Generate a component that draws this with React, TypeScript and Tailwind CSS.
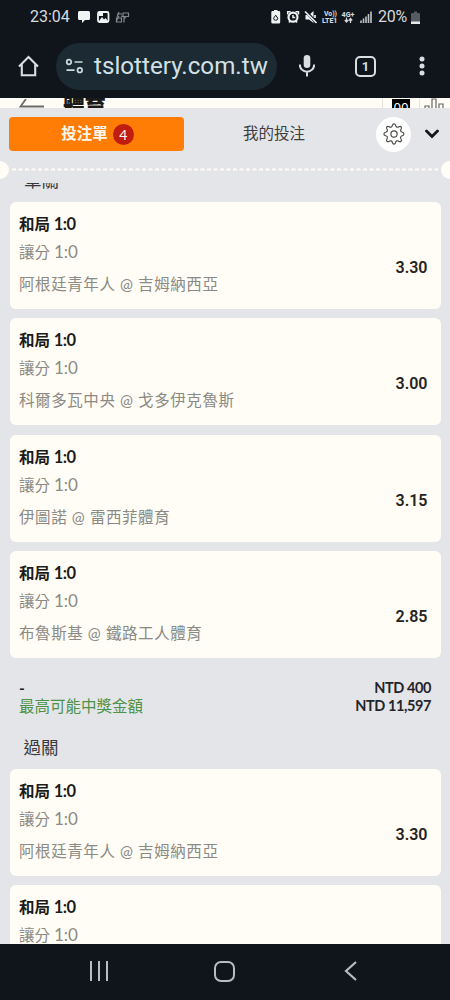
import React from 'react';

interface Bet {
  match: string;
  odds: string;
}

const bets: Bet[] = [
  { match: '阿根廷青年人 @ 吉姆納西亞', odds: '3.30' },
  { match: '科爾多瓦中央 @ 戈多伊克魯斯', odds: '3.00' },
  { match: '伊圖諾 @ 雷西菲體育', odds: '3.15' },
  { match: '布魯斯基 @ 鐵路工人體育', odds: '2.85' },
];

const BetCard: React.FC<Bet> = ({ match, odds }) => (
  <li className="flex h-[107px] shrink-0 items-start justify-between rounded-md bg-[#fffdf5] pr-[13px] pl-[9.5px]">
    <div className="whitespace-nowrap">
      <h3 className="mt-[10px] text-[15.5px] leading-6 font-bold text-[#1c1b19]">
        和局 <span className="text-[16.5px] leading-none tracking-[-0.5px] [font-feature-settings:'calt'_0,'case'_0]">1:0</span>
      </h3>
      <p className="mt-1 text-[15.5px] leading-6 text-[#8b8a85]">
        讓分 <span className="text-[17px] leading-none tracking-[-0.1px] [font-feature-settings:'calt'_0,'case'_0]">1:0</span>
      </p>
      <p className="mt-2 text-[15.5px] leading-6 tracking-[0.58px] text-[#8b8a85]">{match}</p>
    </div>
    <span className="mt-[54px] font-['Roboto','Liberation_Sans',sans-serif] text-[16px] leading-6 font-semibold text-[#24231f]">
      {odds}
    </span>
  </li>
);

const StatusBar: React.FC = () => (
  <div className="flex h-[34px] items-center pl-[30px] font-['Roboto',sans-serif] text-[#d6dadd]">
    <span className="w-[47px] text-[16px] leading-none">23:04</span>
    <svg className="h-[14px] w-[56px]" viewBox="0 0 56 14">
      <path d="M2.500 1h9a1.500 1.500 0 0 1 1.500 1.500v6a1.500 1.500 0 0 1-1.500 1.500H8l-3 3v-3H2.500A1.500 1.500 0 0 1 1 8.500v-6A1.500 1.500 0 0 1 2.500 1z" fill="#f1f4f5" />
      <rect x="21" y="2" width="10.500" height="10" rx="1.500" fill="none" stroke="#f1f4f5" strokeWidth="1.800" />
      <path d="M22 11l3-4 2 2.500 1.500-1.500L31 11z" fill="#f1f4f5" />
      <path d="M22 3h4v3h-4z" fill="#f1f4f5" />
      <path d="M40 4h5M42 2l-2 5M39.500 8h5v4h-5zM46 3h5.500v3.500H46zM47 8v4.500M44 6l5 2M39 12l3-6" fill="none" stroke="#7f868b" strokeWidth="1.200" />
    </svg>
    <svg className="ml-[136px] h-[16px] w-[104px]" viewBox="0 0 104 16">
      <path d="M3.500 2H5V1h3.500v1H10a1.200 1.200 0 0 1 1.200 1.200v10A1.200 1.200 0 0 1 10 14.400H3.500a1.200 1.200 0 0 1-1.200-1.200v-10A1.200 1.200 0 0 1 3.500 2z" fill="#eef1f2" />
      <path d="M4.600 9.200l2.100-3 2.100 3a2.100 2.100 0 0 1-4.200 0z" fill="none" stroke="#10151c" />
      <circle cx="24" cy="8.200" r="4.500" fill="none" stroke="#eef1f2" strokeWidth="2.200" />
      <path d="M18.700 5.500V2.800h3M29.500 5.500V2.800h-3M24 6v2.500h2.200M20 13.500l1-1.500M28 13.500l-1-1.500" fill="none" stroke="#eef1f2" strokeWidth="1.500" />
      <path d="M36.500 6h3.500l4.500-4v12L40 10.500h-3.500z" fill="#eef1f2" />
      <path d="M36.500 2l11 12" stroke="#10151c" strokeWidth="3" />
      <path d="M36 2.500L47.500 14M46 6v3" stroke="#eef1f2" strokeWidth="1.700" />
      <text x="55" y="7" fontSize="6.800" fontWeight="800" fill="#d4d8da">Vo))</text>
      <text x="53" y="14" fontSize="7" fontWeight="800" fill="#d4d8da">LTE1</text>
      <text x="72.500" y="7.500" fontSize="7.200" fontWeight="800" fill="#d4d8da">4G+</text>
      <path d="M77.500 8.500v4.500M75.800 11l1.700 2 1.700-2M81.500 14V9.500M79.800 11.500l1.700-2 1.700 2" fill="none" stroke="#d4d8da" strokeWidth="1.300" />
      <path d="M92 14v-2.500M94.500 14V9.500M97 14V7.500M99.500 14V5M102 14V2.500" stroke="#bfc4c8" strokeWidth="1.600" />
    </svg>
    <span className="ml-[5px] w-[32px] text-[16px] leading-none tracking-[-0.3px]">20%</span>
    <svg className="ml-px h-[13px] w-[9px]" viewBox="0 0 9 13">
      <path d="M1 2h2V.5h3V2h2a1 1 0 0 1 1 1v9.500H0V3a1 1 0 0 1 1-1z" fill="#555b61" />
      <path d="M0 10.500h9V13H0z" fill="#e6e9eb" />
    </svg>
  </div>
);

const AddressBar: React.FC = () => (
  <div className="flex h-16 items-center pl-[18px]">
    <svg className="h-[22px] w-[22px]" viewBox="0 0 22 22" fill="none" stroke="#d9dee1" strokeWidth="2.100" strokeLinejoin="miter">
      <path d="M1 11.500L10.500 2 20 11.500M3.800 9.500v10.700h13.400V9.500" />
    </svg>
    <div className="ml-4 flex h-[47px] w-[221px] items-center rounded-full bg-[#1b2a33] pl-[9px]">
      <svg className="h-[16px] w-[20px] shrink-0" viewBox="0 0 20 16" fill="none" stroke="#cfd9de" strokeWidth="1.700">
        <circle cx="4" cy="4" r="2.300" />
        <path d="M9.500 4H17.500M1.500 12.200H9.500" />
        <circle cx="14.800" cy="12.200" r="2.300" />
      </svg>
      <span className="ml-[9px] font-['Roboto',sans-serif] text-[24.2px] leading-none text-[#d3e0e6]">tslottery.com.tw</span>
    </div>
    <svg className="ml-[22px] h-[24px] w-[16px]" viewBox="0 0 16 24" fill="none" stroke="#d9dee1" strokeWidth="2">
      <rect x="4.700" y="1" width="6.600" height="13" rx="3.300" fill="#d9dee1" stroke="none" />
      <path d="M.8 10.500a7.200 7.200 0 0 0 14.400 0M8 17.500v5" />
    </svg>
    <div className="ml-[40px] flex h-[21px] w-[21px] items-center justify-center rounded-[5px] border-2 border-[#d9dee1] font-['Roboto',sans-serif] text-[13px] leading-none font-bold text-[#d9dee1]">
      1
    </div>
    <svg className="ml-[43px] h-[20px] w-[6px]" viewBox="0 0 6 20" fill="#d9dee1">
      <circle cx="3" cy="3" r="2.500" />
      <circle cx="3" cy="10" r="2.500" />
      <circle cx="3" cy="17" r="2.500" />
    </svg>
  </div>
);

const GearIcon: React.FC = () => (
  <svg className="h-[22px] w-[22px]" viewBox="0 0 24 24" fill="none" stroke="#4b4a47" strokeWidth="1.250" strokeLinejoin="round">
    <path d="M12 1c1.100 0 1.500.7 1.700 1.700.2 1 .6 1.500 1.300 1.800.7.300 1.400.2 2.200-.4.900-.6 1.700-.8 2.500 0s.6 1.600 0 2.500c-.6.800-.7 1.500-.4 2.200.3.700.800 1.100 1.800 1.300 1 .2 1.700.8 1.700 1.900s-.7 1.700-1.700 1.900c-1 .2-1.500.6-1.800 1.300-.3.700-.2 1.400.4 2.200.6.900.8 1.700 0 2.500s-1.600.6-2.500 0c-.8-.6-1.500-.7-2.200-.4-.7.300-1.100.8-1.300 1.800-.2 1-.6 1.700-1.700 1.700s-1.500-.7-1.700-1.700c-.2-1-.6-1.500-1.300-1.800-.7-.3-1.400-.2-2.200.4-.9.600-1.700.8-2.500 0s-.6-1.600 0-2.500c.6-.8.700-1.500.4-2.200-.3-.7-.8-1.100-1.800-1.300C1.900 13.700 1 13.100 1 12s.9-1.700 1.900-1.900c1-.2 1.500-.6 1.800-1.300.3-.7.200-1.400-.4-2.200-.6-.9-.8-1.700 0-2.500s1.600-.6 2.500 0c.8.600 1.500.7 2.200.4.700-.3 1.100-.8 1.300-1.800C10.500 1.700 10.900 1 12 1z" />
    <circle cx="12" cy="12" r="3.400" />
  </svg>
);

const App: React.FC = () => {
  return (
    <div className="flex h-[1000px] w-[450px] flex-col overflow-hidden bg-[#e4e5e9] font-['Lato','Noto_Sans_CJK_TC',sans-serif]">
      <header className="h-[98px] shrink-0 bg-[#10151c]">
        <StatusBar />
        <AddressBar />
      </header>

      {/* Page left visible behind the bet slip */}
      <div className="flex h-[10px] shrink-0 items-start overflow-hidden bg-[#fffdf6]">
        <svg className="mt-px ml-[19px] h-[9px] w-[25px]" viewBox="0 0 25 9" fill="none" stroke="#6d6b68" strokeWidth="1.800">
          <path d="M7 0L1.500 7.500H25" />
        </svg>
        <span className="-mt-[2px] ml-[19px] w-[45px] text-[21.5px] leading-[22px] font-black whitespace-nowrap text-[#1b1a18]">體育</span>
        <div className="ml-[274px] flex h-[20px] w-[38px] justify-center border-x border-[#e6e4dd] pt-px">
          <div className="h-[18px] w-[18px] bg-black text-center font-['Inter',sans-serif] text-[12px] leading-[17px] text-white">00</div>
        </div>
        <svg className="ml-[4px] h-[10px] w-[22px]" viewBox="0 0 22 10" fill="none" stroke="#6b6964" strokeWidth="1.200">
          <path d="M1 10V8h4v2M8 10V1h4v9M15 10V6h4v4" />
        </svg>
      </div>

      <main className="flex min-h-0 flex-1 flex-col">
        <div className="flex h-[52px] shrink-0 items-center pl-[9px]">
          <button className="flex h-[34px] w-[175px] items-center justify-center gap-[5px] rounded bg-[#ff7c05] pl-[2px] text-[15.5px] font-bold text-[#fff8ec]">
            投注單
            <span className="flex h-[21px] w-[21px] items-center justify-center rounded-full bg-[#c01c10] text-[14px] font-normal">4</span>
          </button>
          <button className="w-[180px] text-center text-[15.5px] text-[#403f40]">我的投注</button>
          <button className="ml-[12px] flex h-[35px] w-[35px] items-center justify-center rounded-full bg-white">
            <GearIcon />
          </button>
          <svg className="ml-[14px] h-[10px] w-[14px]" viewBox="0 0 14 10" fill="none" stroke="#171717" strokeWidth="2.800">
            <path d="M1.500 2l5.500 5.500L12.500 2" strokeLinecap="round" />
          </svg>
        </div>

        {/* Perforated edge of the ticket */}
        <div className="flex h-[19px] shrink-0 items-center justify-between">
          <span className="h-[18px] w-[9px] rounded-r-full bg-[#fffdf6]" />
          <svg className="h-[3px] w-[428px]" viewBox="0 0 428 3">
            <path d="M1 1.500h426" stroke="#fffdf6" strokeWidth="2.200" strokeDasharray="4 2.500" />
          </svg>
          <span className="h-[18px] w-[9px] rounded-l-full bg-[#fffdf6]" />
        </div>

        <div className="mt-[4px] flex min-h-0 flex-1 flex-col overflow-hidden">
          <div className="flex h-[7px] shrink-0 items-end overflow-hidden pl-[24px] text-[17.5px] leading-[20px] text-[#3a3a3c]">
            <span className="-mb-px">單關</span>
          </div>
          <ul className="mt-[12px] flex flex-col gap-[9.3px] px-[9.5px]">
            {bets.map((bet) => (
              <BetCard key={bet.match} match={bet.match} odds={bet.odds} />
            ))}
          </ul>

          <div className="mt-[21px] flex justify-between pr-[19px] pl-[19px] text-[15.5px] leading-[18px]">
            <div>
              <p className="font-bold text-[#1c1b19]">-</p>
              <p className="text-[#4c9248]">最高可能中獎金額</p>
            </div>
            <div className="text-right text-[14.5px] font-bold tracking-[-0.4px] text-[#24242a]">
              <p>NTD 400</p>
              <p>NTD 11,597</p>
            </div>
          </div>

          <h2 className="mt-[21px] pl-[23.5px] text-[17.5px] leading-6 text-[#3a3a3c]">過關</h2>
          <ul className="mt-[9px] flex flex-col gap-[9.3px] px-[9.5px]">
            {bets.slice(0, 2).map((bet) => (
              <BetCard key={bet.match} match={bet.match} odds={bet.odds} />
            ))}
          </ul>
        </div>
      </main>

      <nav className="flex h-[56px] shrink-0 items-center bg-[#10151c] pb-[2px] pl-[89px]">
        <svg className="h-[20px] w-[20px]" viewBox="0 0 20 20" stroke="#b9bcc0" strokeWidth="2">
          <path d="M2 0v20M10 0v20M18 0v20" />
        </svg>
        <span className="ml-[105px] h-[21px] w-[21px] rounded-[7px] border-2 border-[#b9bcc0]" />
        <svg className="ml-[109px] h-[20px] w-[13px]" viewBox="0 0 13 20" fill="none" stroke="#b9bcc0" strokeWidth="2.200">
          <path d="M12 1L2 10l10 9" />
        </svg>
      </nav>
    </div>
  );
};

export default App;
